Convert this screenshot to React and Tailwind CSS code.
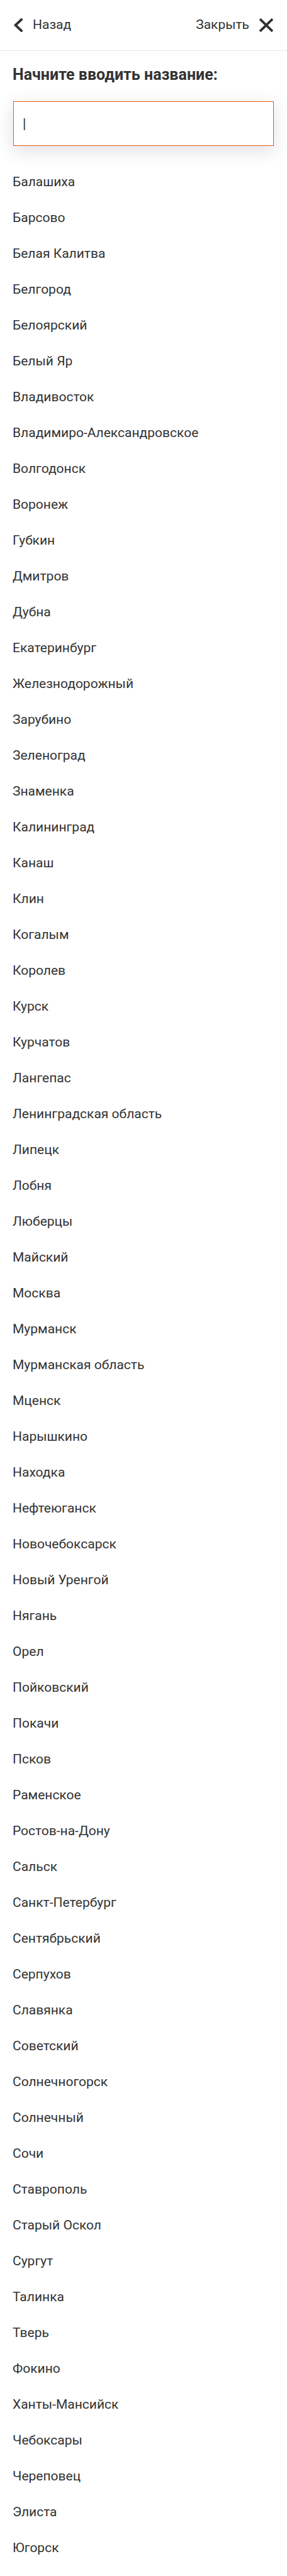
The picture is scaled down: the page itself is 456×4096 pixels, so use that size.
import { useState } from "react";

const CITIES = [
  "Балашиха", "Барсово", "Белая Калитва", "Белгород", "Белоярский", "Белый Яр",
  "Владивосток", "Владимиро-Александровское", "Волгодонск", "Воронеж", "Губкин",
  "Дмитров", "Дубна", "Екатеринбург", "Железнодорожный", "Зарубино", "Зеленоград",
  "Знаменка", "Калининград", "Канаш", "Клин", "Когалым", "Королев", "Курск",
  "Курчатов", "Лангепас", "Ленинградская область", "Липецк", "Лобня", "Люберцы",
  "Майский", "Москва", "Мурманск", "Мурманская область", "Мценск", "Нарышкино",
  "Находка", "Нефтеюганск", "Новочебоксарск", "Новый Уренгой", "Нягань", "Орел",
  "Пойковский", "Покачи", "Псков", "Раменское", "Ростов-на-Дону", "Сальск",
  "Санкт-Петербург", "Сентябрьский", "Серпухов", "Славянка", "Советский",
  "Солнечногорск", "Солнечный", "Сочи", "Ставрополь", "Старый Оскол", "Сургут",
  "Талинка", "Тверь", "Фокино", "Ханты-Мансийск", "Чебоксары", "Череповец",
  "Элиста", "Югорск",
];

function BackIcon() {
  return (
    <svg className="h-[22px] w-[14px]" viewBox="0 0 14 22" fill="none" aria-hidden="true">
      <path d="M12.2 2L2.6 11L12.2 20" stroke="currentColor" strokeWidth="3.8" strokeLinecap="round" />
    </svg>
  );
}

function CloseIcon() {
  return (
    <svg className="size-[22px]" viewBox="0 0 22 22" fill="none" aria-hidden="true">
      <path d="M1 1.2L21 20.8M21 1.2L1 20.8" stroke="currentColor" strokeWidth="3.8" />
    </svg>
  );
}

function Header() {
  return (
    <header className="flex h-[81px] items-center justify-between border-b border-[#e3e3eb] px-[22px]">
      <button type="button" className="flex items-center gap-4">
        <BackIcon />
        <span className="pb-0.5">Назад</span>
      </button>
      <button type="button" className="flex items-center gap-4">
        <span className="pb-0.5">Закрыть</span>
        <CloseIcon />
      </button>
    </header>
  );
}

export default function App() {
  const [query, setQuery] = useState("|");

  return (
    <div className="bg-white pb-[17px] font-['Roboto',sans-serif] text-[21px] leading-6 text-[#333]">
      <Header />
      <main className="px-5 pt-[23px]">
        <label htmlFor="city" className="block text-[25px] leading-[30px] font-bold">
          Начните вводить название:
        </label>
        <div className="px-px pt-[27px]">
          <input
            id="city"
            type="text"
            value={query}
            onChange={(event) => setQuery(event.target.value)}
            className="block h-[71px] w-full border border-[#e55e1a] bg-white px-[14px] text-[22px] shadow-[0_7px_28px_rgba(50,50,93,0.15)] outline-none"
          />
        </div>
        <ul className="mt-7">
          {CITIES.map((city) => (
            <li key={city}>
              <a href="#" className="flex h-[57px] items-center">{city}</a>
            </li>
          ))}
        </ul>
      </main>
    </div>
  );
}
